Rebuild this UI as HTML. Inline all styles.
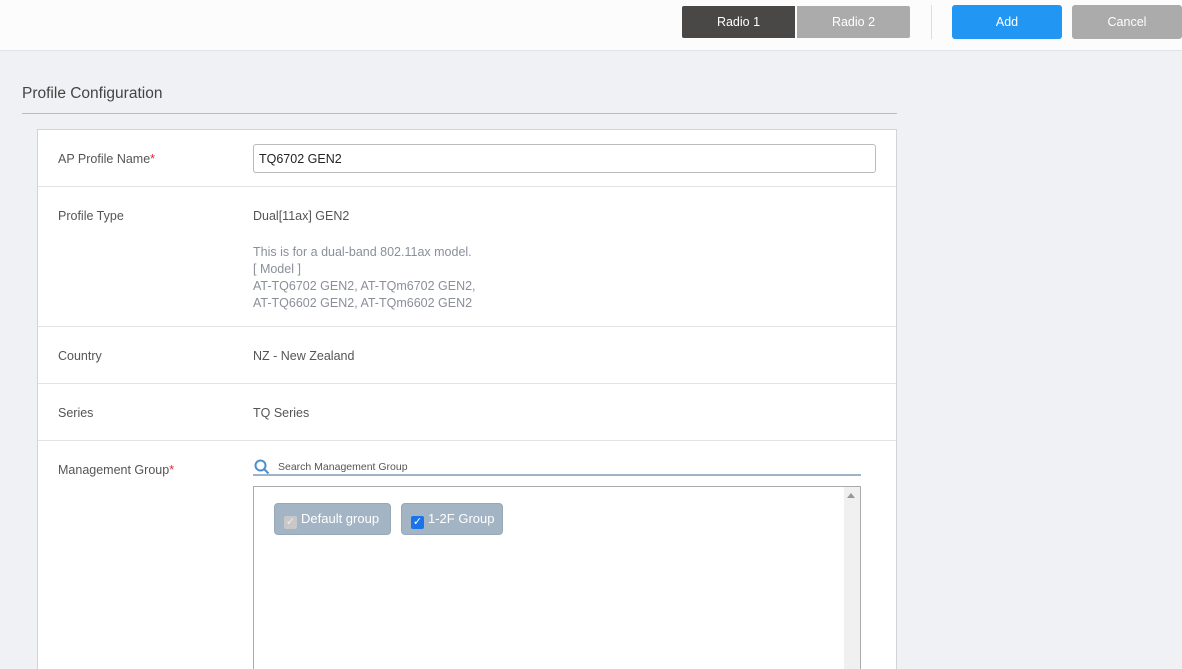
<!DOCTYPE html>
<html style="width:1182px;height:669px;overflow:hidden"><head><style>
*{box-sizing:border-box;margin:0;padding:0}
body{width:1182px;height:669px;overflow:hidden;background:#f0f1f5;font-family:"Liberation Sans",sans-serif;font-size:12.5px;color:#555;position:relative}
.hdr{position:absolute;left:0;top:0;width:1182px;height:51px;background:#fcfcfc;border-bottom:1px solid #e2e3e8}
.b{position:absolute;color:#fff;font-size:12.5px;text-align:center;line-height:33px;height:32px}
.title{position:absolute;left:22px;top:85px;font-size:15.5px;color:#444}
.tl{position:absolute;left:22px;top:113px;width:875px;height:1px;background:#bbb}
.card{position:absolute;left:37px;top:129px;width:860px;height:540px;background:#fff;border:1px solid #d4d4d4;border-bottom:0}
.row{position:absolute;left:0;width:858px;border-bottom:1px solid #e3e3e3}
.lab{position:absolute;left:20px;color:#555}
.val{position:absolute;left:215px;color:#555}
.req{color:#d9302b}
.gray{color:#8a8f99;line-height:17px}
</style></head><body>
<div class="hdr">
<div class="b" style="left:682px;top:6px;width:113px;background:#4a4846;border-radius:2px 0 0 2px">Radio 1</div>
<div class="b" style="left:797px;top:6px;width:113px;background:#ababab;border-radius:0 2px 2px 0">Radio 2</div>
<div style="position:absolute;left:931px;top:5px;width:1px;height:34px;background:#ddd"></div>
<div class="b" style="left:952px;top:5px;width:110px;height:34px;line-height:35px;background:#2196f3;border-radius:3px">Add</div>
<div class="b" style="left:1072px;top:5px;width:110px;height:34px;line-height:35px;background:#ababab;border-radius:3px">Cancel</div>
</div>
<div class="title">Profile Configuration</div>
<div class="tl"></div>
<div class="card">
<div class="row" style="top:0;height:57px">
<div class="lab" style="top:22px">AP Profile Name<span class="req">*</span></div>
<div style="position:absolute;left:215px;top:14px;width:623px;height:29px;border:1px solid #bbb;border-radius:3px;padding:7px 5px;color:#222">TQ6702 GEN2</div>
</div>
<div class="row" style="top:57px;height:140px">
<div class="lab" style="top:22px">Profile Type</div>
<div class="val" style="top:22px">Dual[11ax] GEN2</div>
<div class="val gray" style="top:57px">This is for a dual-band 802.11ax model.<br>[ Model ]<br>AT-TQ6702 GEN2, AT-TQm6702 GEN2,<br>AT-TQ6602 GEN2, AT-TQm6602 GEN2</div>
</div>
<div class="row" style="top:197px;height:57px">
<div class="lab" style="top:22px">Country</div><div class="val" style="top:22px">NZ - New Zealand</div></div>
<div class="row" style="top:254px;height:57px">
<div class="lab" style="top:22px">Series</div><div class="val" style="top:22px">TQ Series</div></div>
<div class="lab" style="top:333px">Management Group<span class="req">*</span></div>
<svg style="position:absolute;left:216px;top:329px" width="16" height="16" viewBox="0 0 16 16"><circle cx="6.5" cy="6.5" r="5" fill="none" stroke="#4a8fd6" stroke-width="2"/><path d="M10 10l4.5 4.5" stroke="#4a8fd6" stroke-width="2"/></svg>
<div style="position:absolute;left:240px;top:331px;font-size:10.5px;color:#555">Search Management Group</div>
<div style="position:absolute;left:215px;top:344px;width:608px;height:2px;background:#9fb3c8"></div>
<div style="position:absolute;left:215px;top:356px;width:608px;height:200px;border:1px solid #aaa;border-bottom:0">
<div style="position:absolute;right:0;top:0;width:16px;height:100%;background:#f0f0f0"></div>
<div style="position:absolute;right:5px;top:6px;border:4px solid transparent;border-bottom:5px solid #999;border-top:0"></div>
<div style="position:absolute;left:20px;top:16px;width:117px;height:32px;background:#a3b4c4;border:1px solid #98a8b8;border-radius:4px;color:#fff;font-size:13px;line-height:30px;padding-left:9px;white-space:nowrap"><span style="display:inline-block;width:13px;height:13px;background:#c8c8c8;border-radius:2px;vertical-align:-2px;margin-right:4px;color:#eee;font-size:11px;line-height:13px;text-align:center">✓</span>Default group</div>
<div style="position:absolute;left:147px;top:16px;width:102px;height:32px;background:#a3b4c4;border:1px solid #98a8b8;border-radius:4px;color:#fff;font-size:13px;line-height:30px;padding-left:9px;white-space:nowrap"><span style="display:inline-block;width:13px;height:13px;background:#1a73e8;border-radius:2px;vertical-align:-2px;margin-right:4px;color:#fff;font-size:11px;line-height:13px;text-align:center">✓</span>1-2F Group</div>
</div>
</div>
</body></html>
